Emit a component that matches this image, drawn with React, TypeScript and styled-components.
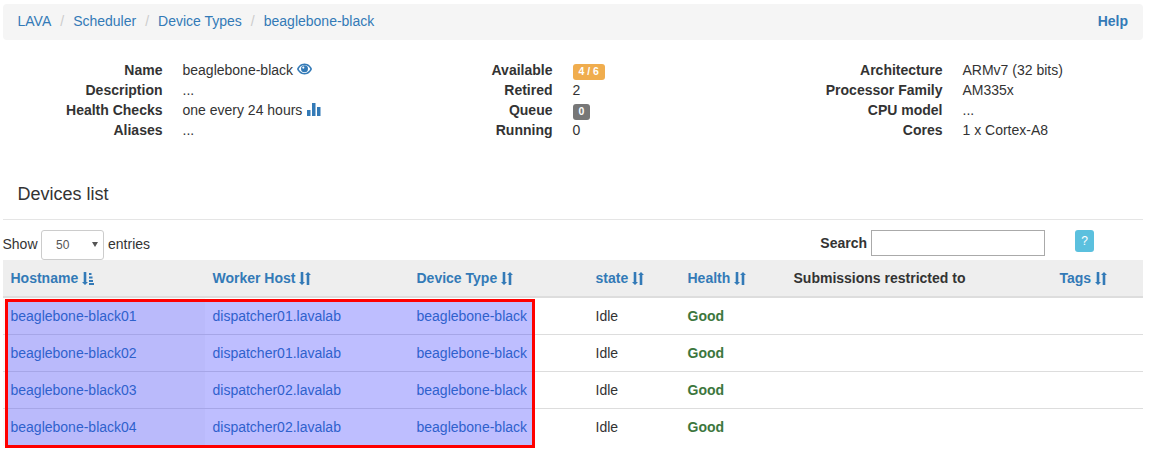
import React from "react";
import styled, { createGlobalStyle } from "styled-components";

const Global = createGlobalStyle`
  html, body { margin: 0; padding: 0; background: #fff; }
  body { font-family: "Liberation Sans", Arial, sans-serif; font-size: 14px; line-height: 20px; color: #333; }
  a { color: #337ab7; text-decoration: none; }
`;

const Page = styled.div`
  position: relative;
  width: 1140px;
  margin-left: 2.5px;
  padding: 4px 0 4px;
`;

const Crumbs = styled.nav`
  display: flex;
  align-items: center;
  height: 36px;
  box-sizing: border-box;
  padding: 0 14.5px 2px 15px;
  background: #f5f5f5;
  border-radius: 4px;
`;

const Crumb = styled.a`
  & + &::before {
    content: "/";
    color: #ccc;
    padding: 0 9px;
  }
`;

const HelpLink = styled.a`
  margin-left: auto;
  font-weight: bold;
`;

const Details = styled.div`
  display: grid;
  grid-template-columns: 390px 390px 360px;
  margin-top: 20px;
`;

const DefList = styled.dl`
  display: grid;
  grid-template-columns: 160px 1fr;
  column-gap: 20px;
  margin: 0;
  align-content: start;
`;

const Term = styled.dt`
  font-weight: bold;
  text-align: right;
  height: 20px;
`;

const Desc = styled.dd`
  margin: 0;
  height: 20px;
  white-space: nowrap;
`;

const InlineIcon = styled.svg`
  display: inline-block;
  fill: #337ab7;
  vertical-align: -1px;
`;

const Label = styled.span<{ $bg: string }>`
  display: inline-block;
  padding: 2.1px 6px 3.1px;
  font-size: 10.5px;
  font-weight: bold;
  line-height: 1;
  color: #fff;
  background: ${(p) => p.$bg};
  border-radius: 3px;
  vertical-align: baseline;
`;

const SectionTitle = styled.h3`
  margin: 44px 0 0;
  padding: 0 15px 15px;
  font-size: 18px;
  line-height: 20px;
  font-weight: 400;
  border-bottom: 1px solid #e5e5e5;
`;

const Controls = styled.div`
  display: flex;
  align-items: flex-start;
  height: 40px;
  box-sizing: border-box;
  padding-top: 10px;
`;

const ControlText = styled.span`
  margin-top: 4px;
`;

const SelectWrap = styled.span`
  position: relative;
  display: block;
  margin: 0 4.5px 0 3.5px;
  &::after {
    content: "";
    position: absolute;
    left: 50.5px;
    top: 12px;
    border-style: solid;
    border-width: 5px 3px 0;
    border-color: #555 transparent transparent;
    pointer-events: none;
  }
`;

const PageSize = styled.select`
  display: block;
  box-sizing: border-box;
  appearance: none;
  width: 62.5px;
  height: 30px;
  padding: 0 5px 0 14px;
  border: 1px solid #ccc;
  border-radius: 3px;
  background: #fff;
  color: #555;
  font: 12px "Liberation Sans", Arial, sans-serif;
`;

const SearchLabel = styled.label`
  display: flex;
  align-items: flex-start;
  margin-left: auto;
  font-weight: bold;
  line-height: 26px;
`;

const SearchInput = styled.input`
  box-sizing: border-box;
  width: 174px;
  height: 26px;
  margin: 0 0 0 4px;
  border: 1px solid #aaa;
  background: #fff;
  padding: 0 4px;
`;

const HelpButton = styled.span`
  display: flex;
  align-items: center;
  justify-content: center;
  width: 19px;
  height: 22px;
  margin: 0 48.5px 0 30px;
  background: #5bc0de;
  border-radius: 3px;
  color: #fff;
  font-size: 12px;
`;

const Table = styled.table`
  width: 1140px;
  table-layout: fixed;
  border-collapse: collapse;
  border-spacing: 0;
`;

const HeadCell = styled.th`
  box-sizing: border-box;
  height: 37px;
  padding: 8px;
  text-align: left;
  background: #eee;
  border-bottom: 2px solid #ddd;
  white-space: nowrap;
`;

const Cell = styled.td<{ $sorted?: boolean }>`
  box-sizing: border-box;
  height: 37px;
  padding: 8px;
  border-top: 1px solid #ddd;
  background: ${(p) => (p.$sorted ? "#fafafa" : "#fff")};
  white-space: nowrap;
`;

const DeviceRow = styled.tr`
  &:first-child td { border-top: 0; height: 37px; }
`;

const Good = styled.strong`
  color: #3c763d;
`;

const Highlight = styled.div`
  position: absolute;
  left: 2.5px;
  top: 299px;
  width: 530px;
  height: 149px;
  box-sizing: border-box;
  border: 3px solid #f00;
  background: rgba(40, 40, 255, 0.3);
  background-clip: padding-box;
  pointer-events: none;
`;

const SortSvg = styled.svg`
  display: inline-block;
  margin-left: 3.5px;
  vertical-align: -2px;
  fill: #337ab7;
`;

const SortBoth = () => (
  <SortSvg width="12" height="13" viewBox="0 0 12 13">
    <path d="M1.700 0h2.600v10H6l-3 3-3-3h1.700zM7.700 13h2.600V3H12L9 0 6 3h1.700z" />
  </SortSvg>
);

const SortAsc = () => (
  <SortSvg width="12" height="13" viewBox="0 0 12 13">
    <path d="M1.700 0h2.600v10H6l-3 3-3-3h1.700zM7 1h2.500v2H7zM7 4.500h3.500v2H7zM7 8h4v2H7zM7 11h5v2H7z" />
  </SortSvg>
);

const Eye = () => (
  <InlineIcon width="15" height="13" viewBox="0 0 15 13">
    <path d="M7.500 .5C3.500 .5 1 3.500 0 6c1 2.500 3.500 5.500 7.500 5.500S14 8.500 15 6C14 3.500 11.500 .5 7.500 .5z" />
    <path fill="#fff" d="M1.700 6C2.700 4 4.800 2 7.500 2s4.800 2 5.800 4c-1 2-3.100 4-5.800 4S2.700 8 1.700 6z" />
    <circle cx="7.500" cy="5.800" r="3.500" />
    <circle fill="#fff" cx="6.300" cy="4.600" r="1.100" />
  </InlineIcon>
);

const Stats = () => (
  <InlineIcon width="15" height="13" viewBox="0 0 15 13">
    <path d="M1 7h3.500v6H1zM6 0h3.500v13H6zM11 4h3.500v9H11z" />
  </InlineIcon>
);

const rows = [
  ["beaglebone-black01", "dispatcher01.lavalab"],
  ["beaglebone-black02", "dispatcher01.lavalab"],
  ["beaglebone-black03", "dispatcher02.lavalab"],
  ["beaglebone-black04", "dispatcher02.lavalab"],
];

export default function App() {
  return (
    <Page>
      <Global />
      <Crumbs>
        <Crumb href="#">LAVA</Crumb>
        <Crumb href="#">Scheduler</Crumb>
        <Crumb href="#">Device Types</Crumb>
        <Crumb href="#">beaglebone-black</Crumb>
        <HelpLink href="#">Help</HelpLink>
      </Crumbs>
      <Details>
        <DefList>
          <Term>Name</Term>
          <Desc>beaglebone-black <Eye /></Desc>
          <Term>Description</Term>
          <Desc>...</Desc>
          <Term>Health Checks</Term>
          <Desc>one every 24 hours <Stats /></Desc>
          <Term>Aliases</Term>
          <Desc>...</Desc>
        </DefList>
        <DefList>
          <Term>Available</Term>
          <Desc><Label $bg="#f0ad4e">4 / 6</Label></Desc>
          <Term>Retired</Term>
          <Desc>2</Desc>
          <Term>Queue</Term>
          <Desc><Label $bg="#777">0</Label></Desc>
          <Term>Running</Term>
          <Desc>0</Desc>
        </DefList>
        <DefList>
          <Term>Architecture</Term>
          <Desc>ARMv7 (32 bits)</Desc>
          <Term>Processor Family</Term>
          <Desc>AM335x</Desc>
          <Term>CPU model</Term>
          <Desc>...</Desc>
          <Term>Cores</Term>
          <Desc>1 x Cortex-A8</Desc>
        </DefList>
      </Details>
      <SectionTitle>Devices list</SectionTitle>
      <Controls>
        <ControlText>Show</ControlText>
        <SelectWrap>
          <PageSize defaultValue="50">
            <option value="50">50</option>
          </PageSize>
        </SelectWrap>
        <ControlText>entries</ControlText>
        <SearchLabel>
          Search
          <SearchInput type="text" />
        </SearchLabel>
        <HelpButton>?</HelpButton>
      </Controls>
      <Table>
        <colgroup>
          <col width="202" />
          <col width="204" />
          <col width="179" />
          <col width="92" />
          <col width="106" />
          <col width="266" />
          <col width="91" />
        </colgroup>
        <thead>
          <tr>
            <HeadCell><a href="#">Hostname<SortAsc /></a></HeadCell>
            <HeadCell><a href="#">Worker Host<SortBoth /></a></HeadCell>
            <HeadCell><a href="#">Device Type<SortBoth /></a></HeadCell>
            <HeadCell><a href="#">state<SortBoth /></a></HeadCell>
            <HeadCell><a href="#">Health<SortBoth /></a></HeadCell>
            <HeadCell>Submissions restricted to</HeadCell>
            <HeadCell><a href="#">Tags<SortBoth /></a></HeadCell>
          </tr>
        </thead>
        <tbody>
          {rows.map(([host, worker]) => (
            <DeviceRow key={host}>
              <Cell $sorted><a href="#">{host}</a></Cell>
              <Cell><a href="#">{worker}</a></Cell>
              <Cell><a href="#">beaglebone-black</a></Cell>
              <Cell>Idle</Cell>
              <Cell><Good>Good</Good></Cell>
              <Cell />
              <Cell />
            </DeviceRow>
          ))}
        </tbody>
      </Table>
      <Highlight />
    </Page>
  );
}
